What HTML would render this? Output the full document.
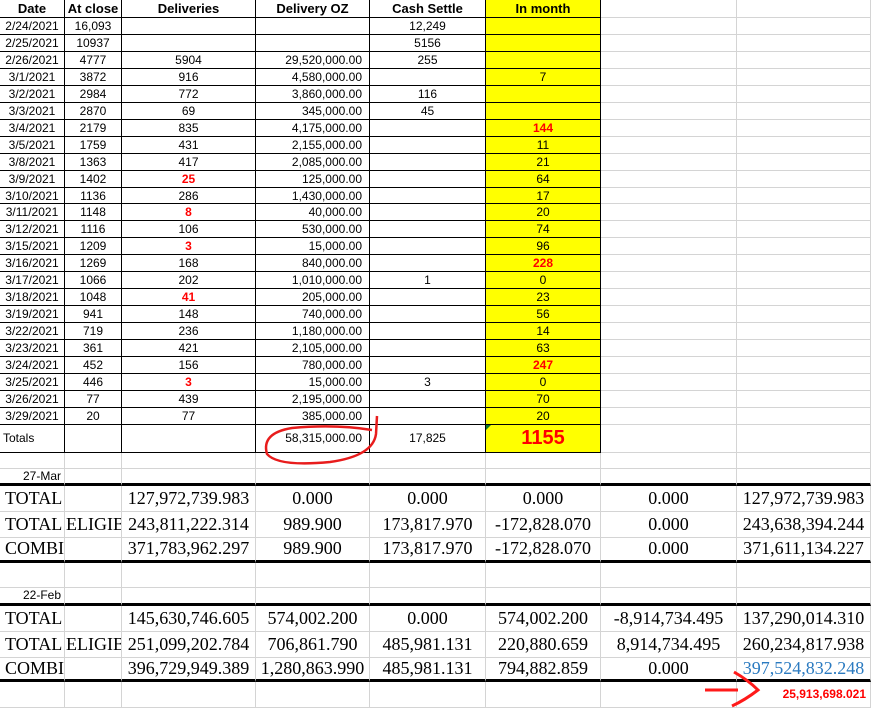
<!DOCTYPE html>
<html><head><meta charset="utf-8"><style>
*{margin:0;padding:0;box-sizing:border-box}
body{width:871px;height:708px;overflow:hidden;background:#fff;font-family:"Liberation Sans",Arial,sans-serif;font-size:12px;color:#000;position:relative}
.g{display:grid;grid-template-columns:65px 57px 134px 114px 116px 115px 136px 134px;
grid-template-rows:18px repeat(24,16.96px) 28px 16px 17px 26px 26px 25px 25px 18px 26px 26px 24px 26px;position:absolute;left:0;top:0;width:871px;height:708px}
.g>i{font-style:normal;display:flex;align-items:center;justify-content:center;border-right:1px solid #d4d4d4;border-bottom:1px solid #d4d4d4;white-space:nowrap;overflow:hidden}
.b{border-right-color:#000!important;border-bottom-color:#000!important}
.y{background:#ffff00}
.h{font-weight:bold;font-size:13px}
.r{color:#f00;font-weight:bold}
.R{justify-content:flex-end!important;padding-right:7px}
.L{justify-content:flex-start!important;padding-left:5px}
.t{border-bottom:3px solid #000!important}
.s{font-family:"Liberation Serif","Times New Roman",serif;font-size:18px;background:#fff}
.o{overflow:visible!important;background:transparent!important}
</style></head><body>
<div class="g">
<i class="b h">Date</i><i class="b h">At close</i><i class="b h">Deliveries</i><i class="b h">Delivery OZ</i><i class="b h">Cash Settle</i><i class="b h y">In month</i><i></i><i></i>
<i class="b">2/24/2021</i><i class="b">16,093</i><i class="b"></i><i class="b R"></i><i class="b">12,249</i><i class="b y"></i><i></i><i></i>
<i class="b">2/25/2021</i><i class="b">10937</i><i class="b"></i><i class="b R"></i><i class="b">5156</i><i class="b y"></i><i></i><i></i>
<i class="b">2/26/2021</i><i class="b">4777</i><i class="b">5904</i><i class="b R">29,520,000.00</i><i class="b">255</i><i class="b y"></i><i></i><i></i>
<i class="b">3/1/2021</i><i class="b">3872</i><i class="b">916</i><i class="b R">4,580,000.00</i><i class="b"></i><i class="b y">7</i><i></i><i></i>
<i class="b">3/2/2021</i><i class="b">2984</i><i class="b">772</i><i class="b R">3,860,000.00</i><i class="b">116</i><i class="b y"></i><i></i><i></i>
<i class="b">3/3/2021</i><i class="b">2870</i><i class="b">69</i><i class="b R">345,000.00</i><i class="b">45</i><i class="b y"></i><i></i><i></i>
<i class="b">3/4/2021</i><i class="b">2179</i><i class="b">835</i><i class="b R">4,175,000.00</i><i class="b"></i><i class="b y r">144</i><i></i><i></i>
<i class="b">3/5/2021</i><i class="b">1759</i><i class="b">431</i><i class="b R">2,155,000.00</i><i class="b"></i><i class="b y">11</i><i></i><i></i>
<i class="b">3/8/2021</i><i class="b">1363</i><i class="b">417</i><i class="b R">2,085,000.00</i><i class="b"></i><i class="b y">21</i><i></i><i></i>
<i class="b">3/9/2021</i><i class="b">1402</i><i class="b r">25</i><i class="b R">125,000.00</i><i class="b"></i><i class="b y">64</i><i></i><i></i>
<i class="b">3/10/2021</i><i class="b">1136</i><i class="b">286</i><i class="b R">1,430,000.00</i><i class="b"></i><i class="b y">17</i><i></i><i></i>
<i class="b">3/11/2021</i><i class="b">1148</i><i class="b r">8</i><i class="b R">40,000.00</i><i class="b"></i><i class="b y">20</i><i></i><i></i>
<i class="b">3/12/2021</i><i class="b">1116</i><i class="b">106</i><i class="b R">530,000.00</i><i class="b"></i><i class="b y">74</i><i></i><i></i>
<i class="b">3/15/2021</i><i class="b">1209</i><i class="b r">3</i><i class="b R">15,000.00</i><i class="b"></i><i class="b y">96</i><i></i><i></i>
<i class="b">3/16/2021</i><i class="b">1269</i><i class="b">168</i><i class="b R">840,000.00</i><i class="b"></i><i class="b y r">228</i><i></i><i></i>
<i class="b">3/17/2021</i><i class="b">1066</i><i class="b">202</i><i class="b R">1,010,000.00</i><i class="b">1</i><i class="b y">0</i><i></i><i></i>
<i class="b">3/18/2021</i><i class="b">1048</i><i class="b r">41</i><i class="b R">205,000.00</i><i class="b"></i><i class="b y">23</i><i></i><i></i>
<i class="b">3/19/2021</i><i class="b">941</i><i class="b">148</i><i class="b R">740,000.00</i><i class="b"></i><i class="b y">56</i><i></i><i></i>
<i class="b">3/22/2021</i><i class="b">719</i><i class="b">236</i><i class="b R">1,180,000.00</i><i class="b"></i><i class="b y">14</i><i></i><i></i>
<i class="b">3/23/2021</i><i class="b">361</i><i class="b">421</i><i class="b R">2,105,000.00</i><i class="b"></i><i class="b y">63</i><i></i><i></i>
<i class="b">3/24/2021</i><i class="b">452</i><i class="b">156</i><i class="b R">780,000.00</i><i class="b"></i><i class="b y r">247</i><i></i><i></i>
<i class="b">3/25/2021</i><i class="b">446</i><i class="b r">3</i><i class="b R">15,000.00</i><i class="b">3</i><i class="b y">0</i><i></i><i></i>
<i class="b">3/26/2021</i><i class="b">77</i><i class="b">439</i><i class="b R">2,195,000.00</i><i class="b"></i><i class="b y">70</i><i></i><i></i>
<i class="b">3/29/2021</i><i class="b">20</i><i class="b">77</i><i class="b R">385,000.00</i><i class="b"></i><i class="b y">20</i><i></i><i></i>
<i class="b L" style="padding-left:3px">Totals</i><i class="b"></i><i class="b"></i><i class="b R">58,315,000.00</i><i class="b">17,825</i><i class="b y r" style="font-size:20px;position:relative">1155<span style="position:absolute;left:0;top:0;border-top:5px solid #0a7a2a;border-right:5px solid transparent"></span></i><i></i><i></i>
<i></i><i></i><i></i><i></i><i></i><i></i><i></i><i></i>
<i class="t R" style="padding-right:3px">27-Mar</i><i class="t"></i><i class="t"></i><i class="t"></i><i class="t"></i><i class="t"></i><i class="t"></i><i class="t"></i>
<i class="s o L">TOTAL</i><i class="o"></i><i class="s">127,972,739.983</i><i class="s">0.000</i><i class="s">0.000</i><i class="s">0.000</i><i class="s">0.000</i><i class="s">127,972,739.983</i>
<i class="s o L">TOTAL ELIGIBLE</i><i class="o"></i><i class="s">243,811,222.314</i><i class="s">989.900</i><i class="s">173,817.970</i><i class="s">-172,828.070</i><i class="s">0.000</i><i class="s">243,638,394.244</i>
<i class="s o L t">COMBI</i><i class="t"></i><i class="s t">371,783,962.297</i><i class="s t">989.900</i><i class="s t">173,817.970</i><i class="s t">-172,828.070</i><i class="s t">0.000</i><i class="s t">371,611,134.227</i>
<i></i><i></i><i></i><i></i><i></i><i></i><i></i><i></i>
<i class="t R" style="padding-right:3px">22-Feb</i><i class="t"></i><i class="t"></i><i class="t"></i><i class="t"></i><i class="t"></i><i class="t"></i><i class="t"></i>
<i class="s o L">TOTAL</i><i class="o"></i><i class="s">145,630,746.605</i><i class="s">574,002.200</i><i class="s">0.000</i><i class="s">574,002.200</i><i class="s">-8,914,734.495</i><i class="s">137,290,014.310</i>
<i class="s o L">TOTAL ELIGIBLE</i><i class="o"></i><i class="s">251,099,202.784</i><i class="s">706,861.790</i><i class="s">485,981.131</i><i class="s">220,880.659</i><i class="s">8,914,734.495</i><i class="s">260,234,817.938</i>
<i class="s o L t">COMBI</i><i class="t"></i><i class="s t">396,729,949.389</i><i class="s t">1,280,863.990</i><i class="s t">485,981.131</i><i class="s t">794,882.859</i><i class="s t">0.000</i><i class="s t" style="color:#2a7ac0">397,524,832.248</i>
<i></i><i></i><i></i><i></i><i></i><i></i><i></i><i class="r R" style="padding-right:4px">25,913,698.021</i>
</div>
<svg width="871" height="708" style="position:absolute;left:0;top:0;pointer-events:none">
<path d="M377,416 L376,434 Q373,456 330,462 Q278,467 267,454 Q261,433 292,428 Q335,424 372,430" fill="none" stroke="#e81c1c" stroke-width="2.5"/>
<path d="M705,690 L738,690 M734,672 Q748,680 758,690 Q745,700 732,706" fill="none" stroke="#ff1a1a" stroke-width="3"/>
</svg>
</body></html>
